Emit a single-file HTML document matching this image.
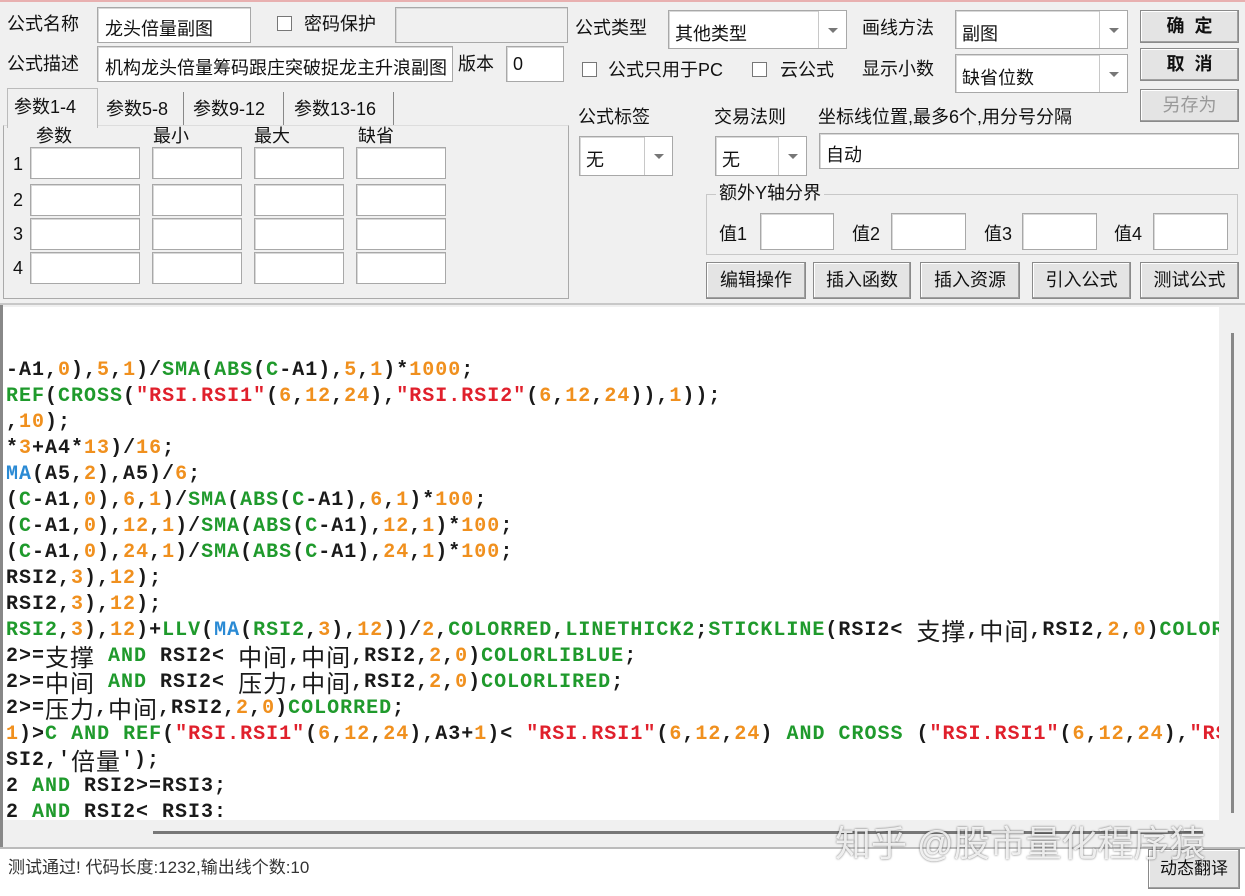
<!DOCTYPE html>
<html><head><meta charset="utf-8"><style>
*{box-sizing:border-box;margin:0;padding:0}
body{width:1245px;height:896px;background:#f0f0f0;position:relative;overflow:hidden;font-family:"Liberation Sans","Noto Sans CJK SC",sans-serif;font-size:18px;color:#111}
.a{position:absolute;white-space:nowrap}
.in{position:absolute;background:#fff;border:1px solid #a8a8a8;box-shadow:inset 1px 1px 0 #d8d8d8}
.lbl{position:absolute;white-space:nowrap;font-size:18px;line-height:20px}
.btn{position:absolute;background:#e4e4e4;border:1px solid #8a8a8a;box-shadow:inset -1px -1px 0 #a0a0a0,inset 1px 1px 0 #fff;text-align:center;font-size:18px}
.cb{position:absolute;width:15px;height:15px;background:#fff;border:1px solid #777}
.dd{position:absolute;top:0;right:0;bottom:0;width:28px;border-left:1px solid #c8c8c8;background:#fff}
.dd:after{content:"";position:absolute;left:9px;top:50%;margin-top:-2px;border-left:5px solid transparent;border-right:5px solid transparent;border-top:5px solid #777}
#code{position:absolute;left:3px;top:310px;width:1216px;height:510px;background:#fff;overflow:hidden}
#codebg{position:absolute;left:3px;top:307px;width:1216px;height:513px;background:#fff}
#code div{position:absolute;left:3px;height:26px;white-space:pre;font-family:"Liberation Mono","Noto Sans CJK SC",monospace;font-weight:bold;font-size:20px;letter-spacing:1px;line-height:26px;color:#1a1a1a}
.g{color:#1f9a2c}.o{color:#f0901e}.r{color:#e0202c}.b{color:#2a8ad4}
.c{display:inline-block;height:26px;line-height:24px;vertical-align:top;font-family:"Noto Sans CJK SC",sans-serif;font-weight:normal;font-size:24px;letter-spacing:1px}
</style></head><body>
<div class="a" style="left:0;top:0;width:1245px;height:2px;background:#e8b0b0"></div>
<div class="lbl" style="left:7px;top:14px">公式名称</div>
<div class="in" style="left:97px;top:7px;width:154px;height:36px"><span class="a" style="left:7px;top:7px">龙头倍量副图</span></div>
<div class="cb" style="left:277px;top:16px"></div>
<div class="lbl" style="left:304px;top:14px">密码保护</div>
<div class="in" style="left:395px;top:7px;width:173px;height:36px;background:#f0f0f0"></div>
<div class="lbl" style="left:7px;top:54px">公式描述</div>
<div class="in" style="left:97px;top:46px;width:356px;height:36px;overflow:hidden"><span class="a" style="left:7px;top:7px">机构龙头倍量筹码跟庄突破捉龙主升浪副图</span></div>
<div class="lbl" style="left:458px;top:54px">版本</div>
<div class="in" style="left:506px;top:46px;width:58px;height:36px"><span class="a" style="left:6px;top:7px">0</span></div>
<div class="a" style="left:3px;top:125px;width:566px;height:174px;border:1px solid #aaa;border-top-color:#ddd;background:#f0f0f0"></div>
<div class="a" style="left:7px;top:88px;width:91px;height:40px;border:1px solid #bbb;border-bottom:none;background:#f0f0f0"></div>
<div class="lbl" style="left:14px;top:97px">参数1-4</div>
<div class="a" style="left:98px;top:92px;width:86px;height:33px;border-right:1px solid #888"></div>
<div class="lbl" style="left:106px;top:99px">参数5-8</div>
<div class="a" style="left:184px;top:92px;width:100px;height:33px;border-right:1px solid #888"></div>
<div class="lbl" style="left:193px;top:99px">参数9-12</div>
<div class="a" style="left:284px;top:92px;width:110px;height:33px;border-right:1px solid #888"></div>
<div class="lbl" style="left:294px;top:99px">参数13-16</div>
<div class="lbl" style="left:36px;top:126px">参数</div>
<div class="lbl" style="left:153px;top:126px">最小</div>
<div class="lbl" style="left:254px;top:126px">最大</div>
<div class="lbl" style="left:358px;top:126px">缺省</div>
<div class="lbl" style="left:13px;top:154px">1</div><div class="lbl" style="left:13px;top:190px">2</div><div class="lbl" style="left:13px;top:224px">3</div><div class="lbl" style="left:13px;top:258px">4</div>
<div class="in" style="left:30px;top:147px;width:110px;height:32px"></div><div class="in" style="left:152px;top:147px;width:90px;height:32px"></div><div class="in" style="left:254px;top:147px;width:90px;height:32px"></div><div class="in" style="left:356px;top:147px;width:90px;height:32px"></div>
<div class="in" style="left:30px;top:184px;width:110px;height:32px"></div><div class="in" style="left:152px;top:184px;width:90px;height:32px"></div><div class="in" style="left:254px;top:184px;width:90px;height:32px"></div><div class="in" style="left:356px;top:184px;width:90px;height:32px"></div>
<div class="in" style="left:30px;top:218px;width:110px;height:32px"></div><div class="in" style="left:152px;top:218px;width:90px;height:32px"></div><div class="in" style="left:254px;top:218px;width:90px;height:32px"></div><div class="in" style="left:356px;top:218px;width:90px;height:32px"></div>
<div class="in" style="left:30px;top:252px;width:110px;height:32px"></div><div class="in" style="left:152px;top:252px;width:90px;height:32px"></div><div class="in" style="left:254px;top:252px;width:90px;height:32px"></div><div class="in" style="left:356px;top:252px;width:90px;height:32px"></div>
<div class="lbl" style="left:575px;top:18px">公式类型</div>
<div class="in" style="left:668px;top:10px;width:179px;height:39px"><span class="a" style="left:6px;top:9px">其他类型</span><div class="dd"></div></div>
<div class="lbl" style="left:862px;top:18px">画线方法</div>
<div class="in" style="left:955px;top:10px;width:173px;height:39px"><span class="a" style="left:6px;top:9px">副图</span><div class="dd"></div></div>
<div class="btn" style="left:1140px;top:10px;width:99px;height:33px;line-height:31px;font-weight:bold">确&nbsp;&nbsp;定</div>
<div class="cb" style="left:582px;top:62px"></div>
<div class="lbl" style="left:608px;top:60px">公式只用于PC</div>
<div class="cb" style="left:752px;top:62px"></div>
<div class="lbl" style="left:780px;top:60px">云公式</div>
<div class="lbl" style="left:862px;top:59px">显示小数</div>
<div class="in" style="left:955px;top:54px;width:173px;height:39px"><span class="a" style="left:6px;top:9px">缺省位数</span><div class="dd"></div></div>
<div class="btn" style="left:1140px;top:48px;width:99px;height:33px;line-height:31px;font-weight:bold">取&nbsp;&nbsp;消</div>
<div class="btn" style="left:1140px;top:89px;width:99px;height:33px;line-height:31px;color:#999">另存为</div>
<div class="lbl" style="left:578px;top:107px">公式标签</div>
<div class="lbl" style="left:714px;top:107px">交易法则</div>
<div class="lbl" style="left:818px;top:107px">坐标线位置,最多6个,用分号分隔</div>
<div class="in" style="left:579px;top:136px;width:94px;height:40px"><span class="a" style="left:6px;top:9px">无</span><div class="dd"></div></div>
<div class="in" style="left:715px;top:136px;width:92px;height:40px"><span class="a" style="left:6px;top:9px">无</span><div class="dd"></div></div>
<div class="in" style="left:819px;top:133px;width:420px;height:36px"><span class="a" style="left:6px;top:7px">自动</span></div>
<div class="a" style="left:706px;top:194px;width:532px;height:61px;border:1px solid #c8c8c8"></div>
<div class="lbl" style="left:716px;top:183px;background:#f0f0f0;padding:0 3px">额外Y轴分界</div>
<div class="lbl" style="left:719px;top:224px">值1</div><div class="in" style="left:760px;top:213px;width:74px;height:37px"></div>
<div class="lbl" style="left:852px;top:224px">值2</div><div class="in" style="left:891px;top:213px;width:75px;height:37px"></div>
<div class="lbl" style="left:984px;top:224px">值3</div><div class="in" style="left:1022px;top:213px;width:75px;height:37px"></div>
<div class="lbl" style="left:1114px;top:224px">值4</div><div class="in" style="left:1153px;top:213px;width:75px;height:37px"></div>
<div class="btn" style="left:706px;top:262px;width:100px;height:37px;line-height:35px">编辑操作</div>
<div class="btn" style="left:813px;top:262px;width:98px;height:37px;line-height:35px">插入函数</div>
<div class="btn" style="left:920px;top:262px;width:100px;height:37px;line-height:35px">插入资源</div>
<div class="btn" style="left:1032px;top:262px;width:99px;height:37px;line-height:35px">引入公式</div>
<div class="btn" style="left:1140px;top:262px;width:99px;height:37px;line-height:35px">测试公式</div>
<div class="a" style="left:0;top:303px;width:1245px;height:2px;background:#c8c8c8"></div>
<div class="a" style="left:0;top:305px;width:3px;height:545px;background:#888"></div>
<div id="codebg"></div>
<div id="code">
<div style="top:48px">-A1,<span class="o">0</span>),<span class="o">5</span>,<span class="o">1</span>)/<span class="g">SMA</span>(<span class="g">ABS</span>(<span class="g">C</span>-A1),<span class="o">5</span>,<span class="o">1</span>)*<span class="o">1000</span>;</div>
<div style="top:74px"><span class="g">REF</span>(<span class="g">CROSS</span>(<span class="r">"RSI.RSI1"</span>(<span class="o">6</span>,<span class="o">12</span>,<span class="o">24</span>),<span class="r">"RSI.RSI2"</span>(<span class="o">6</span>,<span class="o">12</span>,<span class="o">24</span>)),<span class="o">1</span>));</div>
<div style="top:100px">,<span class="o">10</span>);</div>
<div style="top:126px">*<span class="o">3</span>+A4*<span class="o">13</span>)/<span class="o">16</span>;</div>
<div style="top:152px"><span class="b">MA</span>(A5,<span class="o">2</span>),A5)/<span class="o">6</span>;</div>
<div style="top:178px">(<span class="g">C</span>-A1,<span class="o">0</span>),<span class="o">6</span>,<span class="o">1</span>)/<span class="g">SMA</span>(<span class="g">ABS</span>(<span class="g">C</span>-A1),<span class="o">6</span>,<span class="o">1</span>)*<span class="o">100</span>;</div>
<div style="top:204px">(<span class="g">C</span>-A1,<span class="o">0</span>),<span class="o">12</span>,<span class="o">1</span>)/<span class="g">SMA</span>(<span class="g">ABS</span>(<span class="g">C</span>-A1),<span class="o">12</span>,<span class="o">1</span>)*<span class="o">100</span>;</div>
<div style="top:230px">(<span class="g">C</span>-A1,<span class="o">0</span>),<span class="o">24</span>,<span class="o">1</span>)/<span class="g">SMA</span>(<span class="g">ABS</span>(<span class="g">C</span>-A1),<span class="o">24</span>,<span class="o">1</span>)*<span class="o">100</span>;</div>
<div style="top:256px">RSI2,<span class="o">3</span>),<span class="o">12</span>);</div>
<div style="top:282px">RSI2,<span class="o">3</span>),<span class="o">12</span>);</div>
<div style="top:308px"><span class="g">RSI2</span>,<span class="o">3</span>),<span class="o">12</span>)+<span class="g">LLV</span>(<span class="b">MA</span>(<span class="g">RSI2</span>,<span class="o">3</span>),<span class="o">12</span>))/<span class="o">2</span>,<span class="g">COLORRED</span>,<span class="g">LINETHICK2</span>;<span class="g">STICKLINE</span>(RSI2&lt; <span class="c">支撑</span>,<span class="c">中间</span>,RSI2,<span class="o">2</span>,<span class="o">0</span>)<span class="g">COLORRED</span></div>
<div style="top:334px">2&gt;=<span class="c">支撑</span> <span class="g">AND</span> RSI2&lt; <span class="c">中间</span>,<span class="c">中间</span>,RSI2,<span class="o">2</span>,<span class="o">0</span>)<span class="g">COLORLIBLUE</span>;</div>
<div style="top:360px">2&gt;=<span class="c">中间</span> <span class="g">AND</span> RSI2&lt; <span class="c">压力</span>,<span class="c">中间</span>,RSI2,<span class="o">2</span>,<span class="o">0</span>)<span class="g">COLORLIRED</span>;</div>
<div style="top:386px">2&gt;=<span class="c">压力</span>,<span class="c">中间</span>,RSI2,<span class="o">2</span>,<span class="o">0</span>)<span class="g">COLORRED</span>;</div>
<div style="top:412px"><span class="o">1</span>)&gt;<span class="g">C</span> <span class="g">AND</span> <span class="g">REF</span>(<span class="r">"RSI.RSI1"</span>(<span class="o">6</span>,<span class="o">12</span>,<span class="o">24</span>),A3+<span class="o">1</span>)&lt; <span class="r">"RSI.RSI1"</span>(<span class="o">6</span>,<span class="o">12</span>,<span class="o">24</span>) <span class="g">AND</span> <span class="g">CROSS</span> (<span class="r">"RSI.RSI1"</span>(<span class="o">6</span>,<span class="o">12</span>,<span class="o">24</span>),<span class="r">"RSI.RSI2"</span></div>
<div style="top:438px">SI2,'<span class="c">倍量</span>');</div>
<div style="top:464px">2 <span class="g">AND</span> RSI2&gt;=RSI3;</div>
<div style="top:490px">2 <span class="g">AND</span> RSI2&lt; RSI3:</div>
</div>
<div class="a" style="left:1231px;top:333px;width:3px;height:480px;background:#888"></div>
<div class="a" style="left:153px;top:831px;width:1050px;height:3px;background:#777"></div>
<div class="a" style="left:0;top:847px;width:1245px;height:2px;background:#bbb"></div>
<div class="a" style="left:0;top:849px;width:1245px;height:47px;background:#fff"></div>
<div class="lbl" style="left:8px;top:858px;font-size:17px;color:#333">测试通过! 代码长度:1232,输出线个数:10</div>
<div class="btn" style="left:1148px;top:849px;width:92px;height:40px;line-height:38px;font-size:17px">动态翻译</div>
<div class="a" style="left:835px;top:822px;font-size:36px;line-height:44px;color:rgba(255,255,255,0.85);text-shadow:0 0 2px rgba(0,0,0,0.6)">知乎 @股市量化程序猿</div>
</body></html>
